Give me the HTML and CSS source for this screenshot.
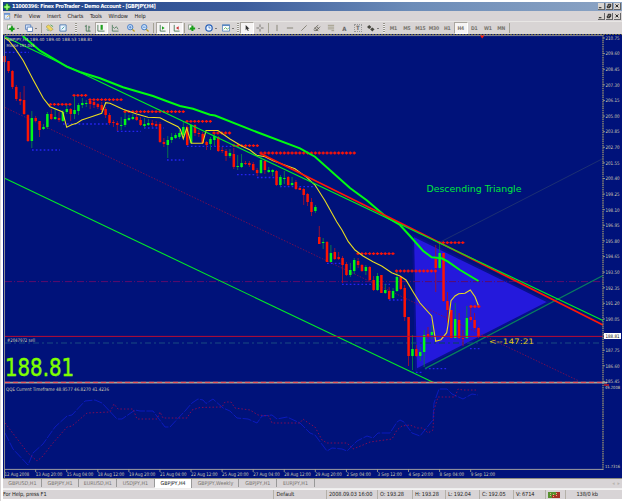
FILE: index.html
```html
<!DOCTYPE html>
<html>
<head>
    <meta charset="UTF-8">
    <title>Finex ProTrader - GBPJPY,H4</title>
    <link rel="stylesheet" href="styles.css">
</head>
<body>
<div class="window">
    <div class="titlebar">
        <svg class="logo" viewBox="0 0 9 9"><path d="M4.5 0L9 4.5L4.5 9L0 4.5Z" fill="#18a018"/><path d="M4.5 1.5v6M1.5 4.5h6" stroke="#a8ff80" stroke-width="1.6"/></svg>
        <span class="title">11000396: Finex ProTrader - Demo Account - [GBPJPY,H4]</span>
        <span class="controls">
            <svg viewBox="0 0 7 7"><path d="M1 5.5h3"/></svg>
            <svg viewBox="0 0 7 7"><path d="M2.5 3V1.5h3v2.5h-1M1.5 3.5h3v2h-3z"/></svg>
            <svg viewBox="0 0 7 7"><path d="M1.7 1.7l3.4 3.4M5.1 1.7l-3.4 3.4"/></svg>
        </span>
    </div>
    <div class="menubar">
        <svg class="doc" viewBox="0 0 8 8"><path d="M.5 1h6v6h-6z" fill="#dcecff" stroke="#7a9cc8"/><path d="M0 1h7" stroke="#5a8ad0" stroke-width="1.5"/><path d="M3 5l2-2 2 1" stroke="#e0b040" fill="none"/></svg>
        <span>File</span><span>View</span><span>Insert</span><span>Charts</span><span>Tools</span><span>Window</span><span>Help</span>
        <span class="controls">
            <svg viewBox="0 0 7 7"><path d="M1 5.5h3"/></svg>
            <svg viewBox="0 0 7 7"><path d="M2.5 3V1.5h3v2.5h-1M1.5 3.5h3v2h-3z"/></svg>
            <svg viewBox="0 0 7 7"><path d="M1.7 1.7l3.4 3.4M5.1 1.7l-3.4 3.4"/></svg>
        </span>
    </div>
    <div class="toolbar">
        <span class="btn drop first"><svg viewBox="0 0 9 9"><path d="M.5 1h5v5h-5z" fill="#fff" stroke="#7a9a7a"/><path d="M5.5 2.5v6M2.5 5.5h6" stroke="#18a018" stroke-width="2.4"/></svg></span>
        <span class="btn drop"><svg viewBox="0 0 9 9"><path d="M.5 1h6v5h-6z" fill="#d8e8ff" stroke="#5a80b8"/><path d="M2.5 3.5h6v5h-6z" fill="#fff" stroke="#5a80b8"/></svg></span>
        <i class="sep s3"></i>
        <span class="btn"><svg viewBox="0 0 9 9"><path d="M0 3l3-2 5 5-3 2z" fill="#f0d860" stroke="#9a8a30" stroke-width=".6"/><path d="M5 1l3 2M1 6l2 2" stroke="#48a048"/></svg></span>
        <span class="btn"><svg viewBox="0 0 9 9"><path d="M1 1h7v7H1z" fill="#e8f4ff" stroke="#4878b0"/><path d="M3 6l3-3" stroke="#48a0a0"/></svg></span>
        <i class="grip g11"></i>
        <span class="btn"><svg viewBox="0 0 9 9"><path d="M2.5 1v7h5M1 2.5h1.5M5.5 2v6M5.5 3.5H7" stroke="#487858" fill="none"/></svg></span>
        <span class="btn on"><svg viewBox="0 0 9 9"><path d="M1 1v7h7.5" stroke="#487858" fill="none"/><path d="M4 1h2.5v5.5H4z" fill="#20a020"/></svg></span>
        <span class="btn"><svg viewBox="0 0 9 9"><path d="M1.5 1v7h7M2 3l2 2 2-2 2 3" stroke="#487858" fill="none" stroke-width=".9"/></svg></span>
        <i class="gap"></i>
        <span class="btn"><svg viewBox="0 0 9 9"><path d="M5 5l3.5 3.5" stroke="#c0a020" stroke-width="1.4"/><circle cx="3.6" cy="3.6" r="3" fill="#d0e8ff" stroke="#3870c0"/><path d="M2 3.6h3.2M3.6 2v3.2" stroke="#3870c0" stroke-width=".8"/></svg></span>
        <span class="btn"><svg viewBox="0 0 9 9"><path d="M5 5l3.5 3.5" stroke="#c0a020" stroke-width="1.4"/><circle cx="3.6" cy="3.6" r="3" fill="#d0e8ff" stroke="#3870c0"/><path d="M2 3.6h3.2" stroke="#3870c0" stroke-width=".8"/></svg></span>
        <i class="sep s4"></i>
        <span class="btn on"><svg viewBox="0 0 9 9"><path d="M2.5 1v7h6" stroke="#487858" fill="none"/><path d="M4.5 2.5l3 2-3 2z" fill="#20a020"/></svg></span>
        <span class="btn on"><svg viewBox="0 0 9 9"><path d="M2.5 1v7h6" stroke="#487858" fill="none"/><path d="M7.5 2.5l-3 2 3 2z" fill="#c83030"/></svg></span>
        <i class="sep s3"></i>
        <span class="btn drop mid"><svg viewBox="0 0 9 9"><path d="M.5 1h4v5h-4z" fill="#fff" stroke="#8a9a8a"/><path d="M5 2v6M2 5h6" stroke="#18a018" stroke-width="2.2"/></svg></span>
        <span class="btn drop mid"><svg viewBox="0 0 9 9"><circle cx="4.5" cy="4.5" r="3.6" fill="#e8f4ff" stroke="#2860b8" stroke-width="1.4"/><path d="M4.5 2.5v2h1.8" stroke="#2860b8" fill="none" stroke-width=".8"/></svg></span>
        <span class="btn drop mid"><svg viewBox="0 0 9 9"><path d="M.5 1h8v7h-8z" fill="#fff" stroke="#5a88c0"/><path d="M0 1.5h9" stroke="#5a88c0" stroke-width="1.6"/><path d="M2 6l2-2 2 2 2-2" stroke="#38a038" fill="none" stroke-width=".8"/></svg></span>
        <i class="grip g3"></i>
        <span class="btn on"><svg viewBox="0 0 9 9"><path d="M3 1v6l1.4-1.3 1 2.3 1-.5-1-2.2H7.3z" fill="#303030"/></svg></span>
        <span class="btn"><svg viewBox="0 0 9 9"><path d="M4.5 .5v3M4.5 5.5v3M.5 4.5h3M5.5 4.5h3" stroke="#706c68"/></svg></span>
        <i class="sep s3"></i>
        <span class="btn"><svg viewBox="0 0 9 9"><path d="M4.5 1v7" stroke="#807c70"/></svg></span>
        <span class="btn"><svg viewBox="0 0 9 9"><path d="M1 4.5h7" stroke="#807c70"/></svg></span>
        <span class="btn"><svg viewBox="0 0 9 9"><path d="M1.5 7.5l6-6" stroke="#807c70"/></svg></span>
        <span class="btn"><svg viewBox="0 0 9 9"><path d="M1 6l5-5M3 8l5-5M2 4l4 4M4 3l3 3M1 7h4" stroke="#605c50" stroke-width=".9"/></svg></span>
        <span class="btn"><svg viewBox="0 0 9 9"><path d="M1 1.5h7M1 3.5h7M1 5.5h7M5 7.5h3" stroke="#908a70" stroke-width=".8"/></svg></span>
        <span class="btn letter">A</span>
        <span class="btn letter"><b>T</b></span>
        <span class="btn drop mid"><svg viewBox="0 0 9 9"><path d="M2.5 1l2.5 2.5-2.5 2L0 3.5zM6 4l2.5 2L6 8.5 3.5 6z" fill="#484840"/></svg></span>
        <i class="grip g5"></i>
        <span class="btn tf">M1</span>
        <span class="btn tf">M5</span>
        <span class="btn tf">M15</span>
        <span class="btn tf">M30</span>
        <span class="btn tf">H1</span>
        <span class="btn tf on">H4</span>
        <span class="btn tf">D1</span>
        <span class="btn tf">W1</span>
        <span class="btn tf">MN</span>
        <i class="sep s3"></i>
    </div>

    <svg id="chart" class="chart" viewBox="3 34 619 445"></svg>

    <div class="tabs">
        <span>GBPUSD,H1</span><span>GBPJPY,H1</span><span>EURUSD,H1</span><span>USDJPY,H1</span><span class="active">GBPJPY,H4</span><span class="weekly">GBPJPY,Weekly</span><span>GBPJPY,H1</span><span>EURJPY,H1</span>
        <em>&#9666; &nbsp;&#9656;</em>
    </div>
    <div class="status">
        <span>For Help, press F1</span>
        <span>Default</span>
        <span>2008.09.03 16:00</span>
        <span>O: 193.28</span>
        <span>H: 193.28</span>
        <span>L: 192.04</span>
        <span>C: 192.05</span>
        <span>V: 6714</span>
        <span class="traffic"><svg viewBox="0 0 12 6"><path d="M0 0h12v6H0z" fill="#a83028"/><path d="M0 0h8v3H4v3H0z" fill="#589030"/><path d="M2.5 1v4M5.5 2v3M8.5 1v4" stroke="#e0c080" stroke-dasharray="1 1"/></svg></span>
        <span class="kb">138/0 kb</span>
    </div>
</div>
<script src="chart.js"></script>
</body>
</html>
```
FILE: styles.css
```css
* { box-sizing: border-box; }
body { margin: 0; background: #fff; width: 625px; height: 501px; overflow: hidden; font-family: "DejaVu Sans Condensed", "DejaVu Sans", sans-serif; font-size: 5.6px; color: #222; border-left: 1px solid #d8d4d4; }
.window { margin: 2px 3px 0 2px; width: 619px; }

.titlebar { display: flex; align-items: center; height: 9px; background: linear-gradient(to right, #1e4288, #3c5c9c 38%, #6c8cb8 66%, #8ca4c4); color: #fff; }
.logo { width: 8px; height: 8px; margin-right: 1px; }
.title { font-family: "DejaVu Sans Condensed", "DejaVu Sans", sans-serif; font-weight: bold; font-size: 5.5px; line-height: 9px; white-space: nowrap; letter-spacing: -0.31px; }
.controls { display: flex; margin-left: auto; gap: 0.8px; padding-right: 1px; }
.controls svg { width: 7px; height: 7px; background: #d8d4d0; border: solid #666; border-width: 0 1px 1px 0; }
.controls path { fill: none; stroke: #111; stroke-width: 1.1; }

.menubar { display: flex; align-items: center; gap: 6.8px; height: 10px; background: #d8d4d6; line-height: 10px; letter-spacing: -0.12px; }
.doc { width: 7px; height: 7px; margin: 0 -3.7px 0 1px; }

.toolbar { display: flex; height: 13px; padding-left: 1px; background: #d8d4d4; border-top: 1px solid #e8e6e4; align-items: center; }
.btn { width: 13.5px; height: 12px; flex: none; display: flex; align-items: center; justify-content: center; }
.btn svg { width: 8px; height: 8px; }
.btn.on { background: #f6f4f4; border: 1px solid #aaa6a0; border-right-color: #fff; border-bottom-color: #fff; }
.drop { width: 18px; gap: 1.5px; }
.drop.mid { width: 17px; }
.drop::after { content: ""; border: 1.7px solid transparent; border-top-color: #222; border-bottom: none; }
.letter { font-size: 6px; font-weight: bold; color: #666; }
.letter b { border: 1px dotted #999; line-height: 6px; padding: 0 1px; }
.tf { font-size: 5px; font-weight: bold; color: #77736c; letter-spacing: -0.2px; }
.sep, .grip, .gap { height: 10px; flex: none; }
.sep { background: linear-gradient(#a4a294, #a4a294) center / 1px 100% no-repeat; }
.grip { background: repeating-linear-gradient(#98958c 0 1px, #eee 1px 2px) center / 2px 100% no-repeat; }
.s3 { width: 3px; }
.s4 { width: 4px; }
.g11 { width: 11px; }
.g3 { width: 3.5px; }
.g5 { width: 5px; }
.gap { width: 3px; }

.chart { display: block; width: 619px; height: 445px; background: #00127a; }
.chart text { font-family: "DejaVu Sans Condensed", "DejaVu Sans", sans-serif; font-size: 4.9px; fill: #d4d0b4; }
.chart .small { font-size: 4.3px; }
.chart .note { font-family: "DejaVu Sans", sans-serif; font-size: 9.5px; fill: #00e83c; }
.chart .count { font-family: "DejaVu Sans", sans-serif; font-size: 7.5px; fill: #e0c810; }
.chart .price { font-family: "DejaVu Sans", sans-serif; font-size: 24px; fill: #80ff00; stroke: #80ff00; stroke-width: 0.5px; }
.chart .current { fill: #111; }

.tabs { display: flex; height: 10px; padding-left: 1px; background: #d8d4d6; line-height: 9px; color: #77736e; font-size: 5.3px; border-bottom: 1px solid #eee; }
.tabs span { width: 37.7px; text-align: center; border-right: 1px solid #999; height: 8px; }
.tabs .active { background: #fff; color: #111; height: 9px; }
.tabs .weekly { width: 47px; }
.tabs em { margin-left: auto; padding-right: 2px; font-style: normal; color: #b8b4b0; }

.status { display: grid; grid-template-columns: 270px 52.5px 51px 35px 33px 34px 34px 32px 20px 1fr; height: 10px; background: #d8d4d6; border-top: 1px solid #f4f2f2; line-height: 9px; }
.status span { padding-left: 2.5px; border-left: 1px solid #b4b0a8; white-space: nowrap; letter-spacing: -0.1px; }
.status span:first-child { padding-left: 0; border: none; }
.traffic svg { width: 12px; height: 6px; display: block; margin-top: 1.5px; }
.status .kb { padding-left: 11px; }
```
FILE: chart.js
```js
var svg = document.getElementById('chart');

function add(tag, attrs, text) {
    var el = document.createElementNS('http://www.w3.org/2000/svg', tag);
    for (var k in attrs) el.setAttribute(k, attrs[k]);
    if (text) el.textContent = text;
    svg.appendChild(el);
    return el;
}

function line(points, color, width, dash) {
    add('polyline', { points: points, fill: 'none', stroke: color, 'stroke-width': width, 'stroke-dasharray': dash || 'none' });
}

function label(x, y, width, text, cls) {
    add('text', { x: x, y: y, textLength: width, lengthAdjust: 'spacingAndGlyphs', 'class': cls || '' }, text);
}

var STEP = 3.884;
var X0 = 4.6;

// pattern: triangle
add('polygon', { points: '413,235.5 549,302 416,370', fill: '#2419dc', stroke: '#08108c', 'stroke-width': 2 });

// levels
line('5,281.6 603,281.6', '#5c0c6c', 1, '7 2 1 2');
line('5,343 603,343', '#103880', 1.4, '6 3 2 3');
line('5,107.5 579,381', '#8c0c48', 0.8, '1.5 1.5');
line('439,242.7 603,158.5', '#283c70', 0.7);

// stops: first x, last x, y
var upper = [[50.5,70,104.3],[74,86,95.3],[90,121,99.7],[125,183,111.7],[187,210,121.4],[214,230,133],[234,257,145.6],
    [261,354,153],[358,393,253.6],[396.5,435,271],[439.5,466,242.7],[471,478.5,306.5]];
var lower = [[5,28,52.3],[32,59,150],[63,108,124],[117,140,131.3],[144,163,128],[167,183,160],[187,232,146.4],[237,255,174.7],[257,277,177.5],
    [280,315,186.7],[327,342,263.3],[342,389,284.3],[389,407,300],[412,421,372.3],[425,447,368.6],[470,478.5,348.7]];
lower.forEach(function (r) {
    line(r[0] + ',' + r[2] + ' ' + (r[1] + 1) + ',' + r[2], '#2424f0', 1.3, '1.7 2.184');
});

// candles: high, body top, body bottom, low, up
var candles = [
    [56,56,62,63,0],[61,61,71,73,0],[70,71,87,89,0],[85,87,99,101,0],[92,99,101,105,0],[86,100,114,115,0],[114,115,141,142,0],[111,118,141,148,1],
    [116,118,121,122,0],[121,121,130,137,0],[124,127,129,130,1],[112,114,127,129,1],[109,114,119,120,0],[109,117,119,120,1],[112,118,120,122,0],[110,112,121,122,1],
    [105,109,112,114,1],[108,109,114,121,0],[95,110,114,119,1],[103,105,111,115,1],[98,103,105,108,1],[100,103,104,107,1],[100,101,104,109,0],[101,102,105,108,0],
    [103,104,107,109,0],[102,105,110,112,0],[107,109,115,118,0],[113,115,123,125,0],[120,122,123,127,0],[121,123,125,131,0],[117,125,126,130,1],[110,119,125,127,1],
    [115,118,120,121,1],[114,117,119,120,1],[115,117,120,121,0],[117,120,125,126,0],[118,124,126,128,1],[119,123,125,126,1],[120,123,125,127,0],[121,124,126,127,0],
    [122,124,142,143,0],[138,142,144,147,0],[136,140,145,158,1],[133,137,140,143,1],[133,135,138,139,1],[130,133,137,139,1],[121,127,135,137,1],[125,127,145,146,0],
    [124,125,143,144,1],[124,125,133,136,0],[130,133,134,137,0],[132,134,143,144,0],[141,142,145,150,0],[137,139,144,150,1],[134,136,140,146,1],[136,137,151,152,0],
    [147,150,151,153,0],[149,151,156,161,0],[149,153,156,158,1],[148,154,167,169,0],[155,166,167,170,1],[154,163,167,168,1],[161,163,164,165,0],[161,163,165,167,0],
    [162,164,170,171,0],[168,170,173,176,0],[157,160,173,174,1],[160,161,170,174,0],[167,170,172,173,1],[169,170,172,176,1],[170,171,185,186,0],[175,177,185,187,1],
    [171,178,179,184,1],[176,177,185,186,0],[177,183,185,186,1],[180,182,189,190,0],[187,188,190,190,0],[188,189,195,205,0],[193,194,202,206,0],[198,202,212,216,0],
    [205,207,211,213,1],[226,237,244,244,0],[238,242,243,249,1],[241,242,262,262,0],[245,253,262,262,1],[248,252,259,260,0],[252,257,259,260,0],[256,258,265,283,0],
    [262,264,275,276,0],[263,270,275,277,1],[258,260,271,274,1],[258,261,265,268,0],[264,265,271,272,0],[265,267,271,275,1],[266,267,280,281,0],[276,280,290,291,0],
    [273,276,290,291,1],[275,275,293,293,0],[284,290,293,294,1],[287,291,299,300,0],[288,291,298,299,1],[272,277,291,292,1],[276,277,289,290,0],[285,288,317,321,0],
    [317,317,356,366,0],[335,349,356,370,1],[345,349,356,357,0],[347,352,356,361,1],[330,335,352,367,1],[327,334,336,339,0],[325,332,335,339,1],[245,259,268,292,0],
    [243,253,268,270,1],[253,253,301,302,0],[292,301,310,323,0],[310,310,338,338,0],[303,319,338,338,1],[313,320,338,339,0],[330,338,339,346,0],[306,318,338,339,1],
    [305,317,320,322,0],[313,320,328,330,0],[327,328,337,338,0]
];
candles.forEach(function (c, i) {
    var x = X0 + i * STEP;
    add('rect', { x: x - 0.4, y: c[0], width: 0.9, height: c[3] - c[0], fill: c[4] ? '#088048' : '#a01030' });
    add('rect', { x: x - 1.2, y: c[1], width: 2.5, height: c[2] - c[1], fill: c[4] ? '#00f818' : '#fc1404' });
});

upper.forEach(function (r) {
    for (var x = r[0]; x <= r[1] + 0.5; x += STEP) {
        add('path', { d: 'M' + (x - 1.6) + ' ' + r[2] + 'h3.2M' + x + ' ' + (r[2] - 1.4) + 'v2.8', stroke: '#fc1408', 'stroke-width': 1.3 });
    }
});

// moving averages and trend lines
line('4.7,38 8.3,40 15,48.3 23.3,60.7 33.3,80 43.3,98.3 50,106.7 62.7,112 66.7,127.3 71.7,124.7 76.7,123.3 81.7,120 90,117.3 101.7,113.3 105.7,102.7 110,103.3 123,109.3 136.7,114 148,117.3 160,117.7 166.7,121.3 178,126.7 180.3,129.3 183.3,138.7 186.7,128 191.3,143.3 202.7,143.3 206,130.5 218,130.5 230,139 241.7,146 250,150 256.7,155.3 265,156.7 273,160.7 295,168.7 306.7,177.3 315,185 325,200.7 336.7,221.7 342,230 348.3,241.7 355,250 363,256 373,261.7 381.7,266 391.7,272.7 400,276 406,280 413,291.7 420,303 431.7,316 435.7,341.3 441,339.7 446.7,332.7 448,325 451,300.7 455,296 458.7,293.7 465,293.3 470.3,290 475,296.7 478.3,305.3', '#e8dc20', 1.1);
line('425,368.7 603,275.5', '#087c60', 1.3);
line('4.7,178.3 433,382.3', '#00e828', 1.1);
line('22.7,36 40,50.7 66.7,66.7 80,72 100,78.3 123,87.3 153,96 167,101.3 180,106 193,108.7 210,114.7 215,115.5 256.7,132 300,148.3 315,156.7 350,188 366.7,200.3 386.7,217.3 400,225 410,236 423,250.7 431.7,257.3 441.7,258.3 448,261.7 460,270 478.5,281', '#00fc10', 2);
line('260,153.3 410,227.7 603,325', '#fc1808', 1.8);
line('5,36.8 603,320.5', '#00f020', 1.1);
line('5,336.4 603,336.4', '#b80c34', 1);

// QQE window
line('5,433 13,449 28,465 33,453 43,444 55,427 67,416 72,415 85,401 95,400 102,403 117,419 122,419 135,410 140,411 153,411 165,427 170,427 183,413 185,411 192,403 198,399 203,400 206,403.5 213,399 223,408 230,411 237,418 248,419 257,423 262,416 272,415 277,419 287,417 300,423 310,433 315,435 327,451 332,448 342,449 347,451 357,441 367,436 373,438 378,433 390,433 397,422 400,420 404,422 412,433 420,436 433,420 434,403 439,389 447,389 452,394 463,399 472,394 478,395', '#0c1cc4', 0.9, '9 1.5');
line('5,423 28,453 37,461 42,457 53,443 67,427 72,426 87,413 110,412 114,404 118,409 133,409 137,419 157,419 160,412 163,418 187,418 192,410 200,407.5 222,407 225,402 231,402 235,408 250,410 258,415 269,416 272,423 300,423 303,419 307,422 315,427 322,440 327,443 347,443 353,449 363,445 370,442 392,439 397,430 402,426 410,425 417,428 423,428 428,433 433,430 434,410 438,397 455,397 458,389 463,390 478,390', '#8c0c50', 0.9, '1.5 2');

// frame, axes
line('3,34.5 622,34.5', '#6c6840', 1, '2 1');
line('4.5,479 4.5,35.6 603,35.6', '#8c8c94', 1);
line('603,35 603,470', '#8c8870', 1.4, '1.5 0.7');
line('5,469.4 603,469.4', '#9c9ca0', 1);
line('5,382.7 607,382.7', '#a8a098', 1.8);
line('5,382.3 603,382.3', '#fc4850', 1, '5 3');
line('3,478.5 622,478.5', '#8c8c80', 1);
add('path', { d: 'M480 35.5h4.4l-2.2 3z', fill: '#fc1808' });
line('604,385 609,385', '#fc1808', 1.2);

for (var k = 0; k < 23; k++) {
    var y = 38 + k * 15.61;
    line('603,' + y + ' 605,' + y, '#a8a490', 0.8);
    if (k != 19) label(605.5, y + 1.8, 14, (210.75 - k * 1.15).toFixed(2));
}
add('rect', { x: 604, y: 333, width: 17, height: 6, fill: '#fff' });
label(605.5, 337.8, 14, '188.81', 'current');
label(605, 389, 15, '49.2008', 'small');
label(605, 468, 15, '11.7316', 'small');

var dates = ['12 Aug 2008', '13 Aug 20:00', '15 Aug 04:00', '18 Aug 12:00', '19 Aug 20:00', '21 Aug 04:00', '22 Aug 12:00', '25 Aug 20:00',
    '27 Aug 04:00', '28 Aug 12:00', '29 Aug 20:00', '2 Sep 04:00', '3 Sep 12:00', '4 Sep 20:00', '8 Sep 04:00', '9 Sep 12:00'];
dates.forEach(function (d, i) {
    var x = X0 + i * STEP * 8;
    line(x + ',469 ' + x + ',472', '#a8a490', 0.8);
    label(x, 476, d.length > 11 ? 26.5 : 24.5, d);
});

label(6.5, 41.4, 86, 'GBPJPY,H4  189.40 189.40 188.53 188.81', 'small');
label(6.5, 46.6, 28, 'Moose 191.046', 'small');
label(7, 342, 28, '#2047972 sell');
label(6, 390.8, 103, 'QQE Current Timeframe 48.9577 46.8270 41.4236');
label(5, 375.5, 69, '188.81', 'price');
label(426.5, 191.5, 95, 'Descending Triangle', 'note');
label(489, 344, 45, '<--147:21', 'count');
```
